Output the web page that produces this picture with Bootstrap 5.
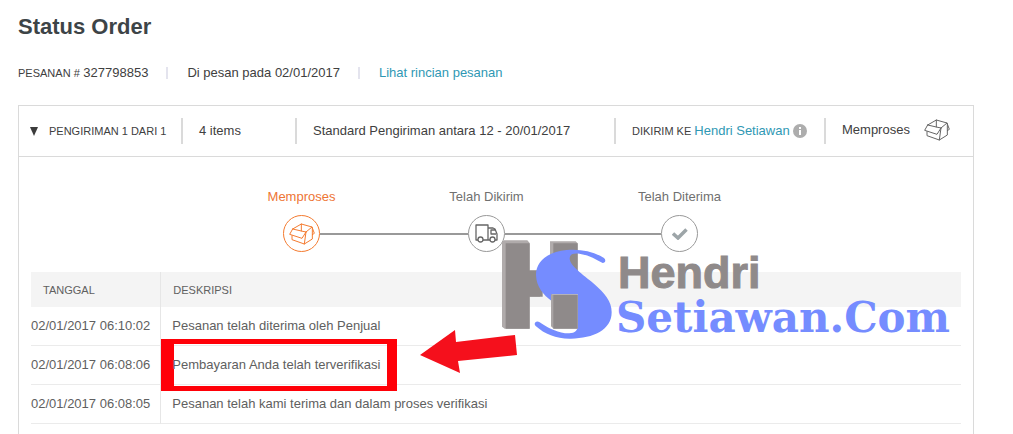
<!DOCTYPE html>
<html lang="id">
<head>
<meta charset="utf-8">
<meta name="viewport" content="width=device-width, initial-scale=1">
<title>Status Order</title>
<link href="https://cdn.jsdelivr.net/npm/bootstrap@5.3.0/dist/css/bootstrap.min.css" rel="stylesheet">
<style>
  body { font-family: "Liberation Sans", Arial, sans-serif; font-size: 13px; line-height: 18px; color: #404040; background: #fff; }
  a { color: #2f98b4; text-decoration: none; }
  .page { padding: 14px 39px 0 18px; }
  .page-title { font-size: 22px; line-height: 26px; color: #3d4447; margin-bottom: 24px; }
  .caps { font-size: 11px; }
  .order-meta { gap: 18px; margin-bottom: 23px; }
  .order-meta > * + * { display: flex; align-items: center; gap: 19px; }
  .order-meta > * + *::before { content: ""; width: 2px; height: 12px; background: #e4e4ee; }
  .shipment { border: 1px solid #dadada; border-bottom: 0; }
  .shipment-head { display: grid; grid-template-columns: 162fr 114fr 319fr 210fr 149fr; height: 51px; border-bottom: 1px solid #dadada; }
  .shipment-head > * { height: 26px; white-space: nowrap; }
  .shipment-head > * + * { border-left: 2px solid #dadada; padding-left: 16px; }
  .toggle { border: 0; background: none; padding: 0 0 0 11px; color: inherit; gap: 11px; }
  .recipient { gap: 3px; }
  .state { gap: 14px; padding-bottom: 2px; }
  .steps { padding: 31px 11px 0 0; margin-bottom: 20px; }
  .step { width: 37px; color: #707070; white-space: nowrap; gap: 9px; }
  .step.current { color: #ee7534; }
  .dot { width: 37px; height: 37px; border: 1px solid #999; border-radius: 50%; color: #666; }
  .current .dot { border-color: #f47b30; color: #f47b30; }
  .connector { height: 2px; background: #999; margin-bottom: 17px; width: 148px; }
  .connector-long { width: 156px; }
  .history { margin: 0 12px; color: #606060; }
  .history table { border-collapse: separate; border-spacing: 0; }
  .history th { height: 35px; padding: 0 12px; font-size: 11px; font-weight: 400; background: #f4f4f4; }
  .history td { height: 39px; padding: 0 11px; border-bottom: 1px solid #ebebeb; }
  .history td:first-child { padding: 0 10px 0 0; white-space: nowrap; }
  .history th:first-child, .history td:first-child { width: 130px; border-right: 1px solid #e6e6e6; }
  .highlight { left: 0; top: -7px; width: 236px; height: 52px; border: solid #ff0008; border-width: 5px 10px 5px 13px; }
  .pointer { left: 258px; top: -19px; }
  .watermark { left: 471px; top: 124px; pointer-events: none; }
  .mark-first { font: bold 45px "Liberation Sans", sans-serif; }
  .mark-last { font: bold 42px "DejaVu Serif", serif; }
</style>
</head>
<body>
<svg class="d-none" aria-hidden="true">
  <symbol id="box" viewBox="0 0 78 66">
    <g fill="none" stroke="currentColor" stroke-width="3" stroke-linejoin="round" stroke-linecap="round">
      <path d="M11 18 37 3 69 12 51 27M11 18 2 34 39 46 51 27M11 18 37 24 51 27M37 3V24M9 38V50L46 63 70 48V14M46 63 51 27M69 12 76 31 70 35"/>
    </g>
  </symbol>
</svg>
<main class="page d-flex flex-column min-vh-100">
  <h1 class="page-title fw-bold">Status Order</h1>
  <div class="order-meta d-flex">
    <span><span class="caps">PESANAN #</span> 327798853</span>
    <span>Di pesan pada 02/01/2017</span>
    <span><a href="#">Lihat rincian pesanan</a></span>
  </div>

  <section class="shipment position-relative flex-grow-1">
    <div class="shipment-head align-items-center">
      <button class="toggle caps d-flex align-items-center" type="button" aria-expanded="true">
        <svg width="8" height="9" viewBox="0 0 8 9" aria-hidden="true"><path d="M0 0H8L4 9Z" fill="#3c3c3c"/></svg>
        PENGIRIMAN 1 DARI 1
      </button>
      <div class="d-flex align-items-center">4 items</div>
      <div class="d-flex align-items-center">Standard Pengiriman antara 12 - 20/01/2017</div>
      <div class="recipient d-flex align-items-center">
        <span class="caps">DIKIRIM KE</span> <a href="#">Hendri Setiawan</a>
        <svg width="14" height="14" viewBox="0 0 14 14" aria-hidden="true"><circle cx="7" cy="7" r="7" fill="#adadad"/><path d="M6 3h2v2H6zM6 6h2v5H6z" fill="#fff"/></svg>
      </div>
      <div class="state d-flex align-items-center">Memproses
        <svg width="26" height="22" color="#666" aria-hidden="true"><use href="#box"/></svg>
      </div>
    </div>

    <div class="steps d-flex justify-content-center align-items-end">
      <div class="step current d-flex flex-column align-items-center">
        <span>Memproses</span>
        <span class="dot d-flex align-items-center justify-content-center"><svg width="26" height="22" aria-hidden="true"><use href="#box"/></svg></span>
      </div>
      <div class="connector"></div>
      <div class="step d-flex flex-column align-items-center">
        <span>Telah Dikirim</span>
        <span class="dot d-flex align-items-center justify-content-center">
          <svg width="23" height="19" viewBox="0 0 23 19" fill="none" stroke="#666" stroke-width="1.3" stroke-linejoin="round" aria-hidden="true"><path d="M3 16H1V1H13V16H8M13 16V4H18L20 5 22 10V16H20M13 16H15M21 10H16V6H20"/><circle cx="5.500" cy="15.500" r="2.500"/><circle cx="17.500" cy="15.500" r="2.500"/></svg>
        </span>
      </div>
      <div class="connector connector-long"></div>
      <div class="step d-flex flex-column align-items-center">
        <span>Telah Diterima</span>
        <span class="dot d-flex align-items-center justify-content-center">
          <svg width="16" height="12" viewBox="0 0 16 12" fill="none" stroke="#9da5a8" stroke-width="3.500" aria-hidden="true"><path d="M1 5.500 6 10 14.500 1.500"/></svg>
        </span>
      </div>
    </div>

    <div class="history">
      <table class="w-100">
        <thead><tr><th scope="col">TANGGAL</th><th scope="col">DESKRIPSI</th></tr></thead>
        <tbody>
          <tr><td>02/01/2017 06:10:02</td><td>Pesanan telah diterima oleh Penjual</td></tr>
          <tr><td>02/01/2017 06:08:06</td><td class="position-relative">
            <span class="highlight position-absolute"></span>
            <span class="position-relative">Pembayaran Anda telah terverifikasi</span>
            <svg class="pointer position-absolute" width="100" height="46" viewBox="0 0 100 46" aria-hidden="true"><path d="M1 28 36 3 37 15 96 8 98 28 39 34 41 46Z" fill="#f5101c"/></svg>
          </td></tr>
          <tr><td>02/01/2017 06:08:05</td><td>Pesanan telah kami terima dan dalam proses verifikasi</td></tr>
        </tbody>
      </table>
    </div>

    <svg class="watermark position-absolute" width="480" height="112" viewBox="0 0 480 112">
      <g transform="scale(.33333)">
        <path d="M36 36 42 31H112L119 39V120H150V200H119V296H44L36 290ZM180 34H257L263 40V150H180Z" fill="#b0abab"/>
        <path d="M47 40H119V122H158V200H119V296H47ZM190 40H263V150H190Z" fill="#8f8a8a"/>
        <path d="M338 99C346 98 349 90 342 84 310 64 270 56 230 60 175 64 137 95 138 135 139 170 160 195 186 214V193H263V290C262 306 248 311 225 310 195 305 170 292 149 277 139 270 129 280 137 288 165 313 200 327 243 326 310 325 365 300 365 247 365 215 345 190 310 160 280 134 239 108 239 85 240 72 250 69 268 71 295 75 318 88 338 99Z" fill="#758cff"/>
        <path d="M183 193H263V296H191L183 289Z" fill="#aaa5a5"/><path d="M190 195H263V296H190Z" fill="#8f8a8a"/>
      </g>
      <text class="mark-first" x="128" y="58" fill="#8f8a8a" stroke="#8f8a8a">Hendri</text>
      <text class="mark-last" x="126" y="102" fill="#758cff">Setiawan.Com</text>
    </svg>
  </section>
</main>
<script src="https://cdn.jsdelivr.net/npm/bootstrap@5.3.0/dist/js/bootstrap.bundle.min.js"></script>
</body>
</html>
